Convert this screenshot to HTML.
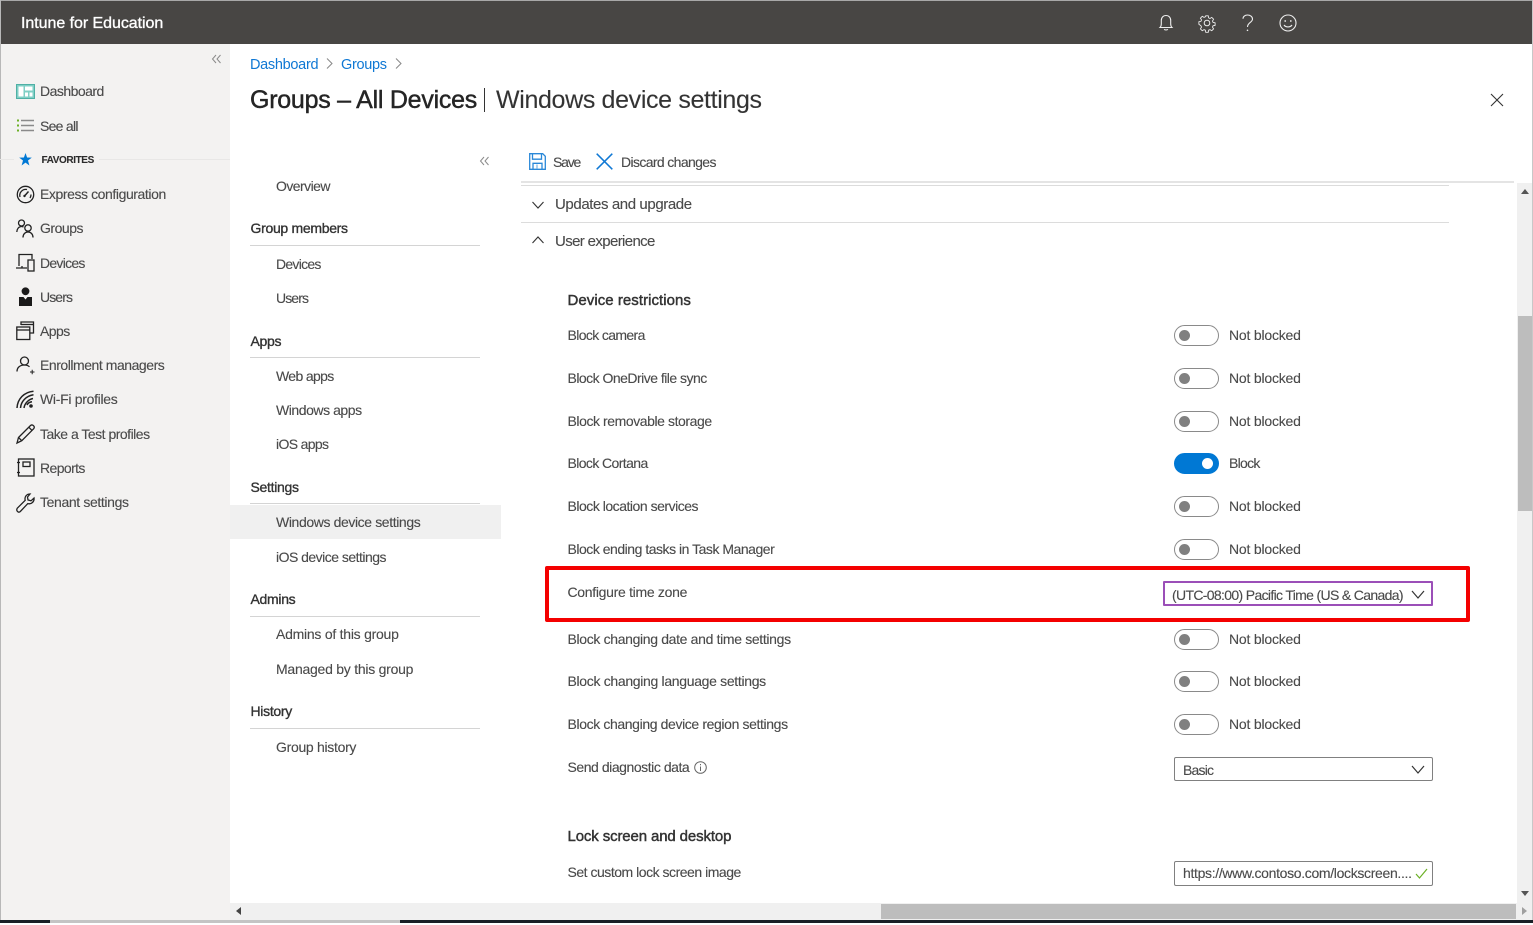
<!DOCTYPE html>
<html><head><meta charset="utf-8"><title>Intune for Education</title>
<style>
html,body{margin:0;padding:0;width:1533px;height:925px;overflow:hidden;background:#fff;font-family:"Liberation Sans",sans-serif;color:#4a4a4a}
.a{position:absolute}
.t{position:absolute;white-space:nowrap;line-height:20px;font-size:14px;letter-spacing:-.3px;color:#4a4a4a;-webkit-text-stroke:.12px #4a4a4a}
.h{color:#333;font-weight:400;-webkit-text-stroke:.35px #333}
.s{font-size:15px;letter-spacing:.05px;-webkit-text-stroke:.45px #333}
.l{position:absolute;background:#d4d4d4;height:1px}
svg{position:absolute;overflow:visible}
.sw{position:absolute;left:1174px;width:43px;height:19px;border:1.5px solid #8a8a8a;border-radius:11px;background:#fff}
.sw i{position:absolute;left:4px;top:4px;width:11px;height:11px;border-radius:50%;background:#808080}
.sw.on{background:#0078d4;border-color:#0078d4}
.sw.on i{left:27px;background:#fff}
.st{left:1229px;letter-spacing:-.2px}
</style></head><body>
<div class="a" style="left:0;top:0;width:1533px;height:44px;background:#484644"></div>
<div class="a" style="left:0;top:0;width:1533px;height:1px;background:#a8a8a8"></div>
<div class="a" style="left:0;top:44px;width:230px;height:876px;background:#f3f2f1"></div>
<div class="a" style="left:0;top:0;width:1px;height:920px;background:#b8b8b8"></div>
<div class="a" style="left:1532px;top:0;width:1px;height:920px;background:#c8c8c8"></div>
<div class="t" style="left:21px;top:14px;color:#fff;font-size:16px;letter-spacing:-.05px;-webkit-text-stroke:.35px #fff">Intune for Education</div>

<!-- header icons -->
<svg style="left:1158px;top:14px" width="16" height="18" viewBox="0 0 16 18" fill="none" stroke="#eee" stroke-width="1.1"><path d="M2 13.500h12c-1-1-1.300-2-1.300-3.500V6.500C12.700 3.500 10.800 1.500 8 1.500S3.300 3.500 3.300 6.500V10C3.300 11.500 3 12.500 2 13.500Z"/><path d="M6.200 15.200c.5 1 3.100 1 3.600 0"/></svg>
<svg style="left:1198px;top:14px" width="18" height="18" viewBox="0 0 18 18" fill="none" stroke="#eee" stroke-width="1"><circle cx="9" cy="9" r="2.800"/><path d="M7.600 1h2.800l.4 2.300 1.500.7 2-1.200 2 2-1.200 2 .6 1.500 2.300.5v2.800l-2.300.5-.6 1.500 1.200 2-2 2-2-1.200-1.500.6-.4 2.300H7.600l-.4-2.300-1.500-.6-2 1.200-2-2 1.200-2-.6-1.500L0 10.400V7.600l2.300-.5.6-1.500-1.200-2 2-2 2 1.200 1.500-.7Z" transform="translate(.9 .9) scale(.9)"/></svg>
<svg style="left:1242px;top:14px" width="12" height="18" viewBox="0 0 12 18" fill="none" stroke="#eee" stroke-width="1.1"><path d="M1 4.800C1 2.500 3 1 5.500 1S10.500 2.500 10.500 5c0 3.500-5 3.600-5 8"/><circle cx="5.500" cy="16.300" r=".8" fill="#eee" stroke="none"/></svg>
<svg style="left:1279px;top:14px" width="18" height="18" viewBox="0 0 18 18" fill="none" stroke="#eee" stroke-width="1.1"><circle cx="9" cy="9" r="8"/><circle cx="6.200" cy="7" r=".9" fill="#eee" stroke="none"/><circle cx="11.800" cy="7" r=".9" fill="#eee" stroke="none"/><path d="M5 11c1.800 2.600 6.200 2.600 8 0"/></svg>

<!-- left nav -->
<svg style="left:212px;top:54px" width="9" height="10" viewBox="0 0 9 10" fill="none" stroke="#8a8a8a"><path d="M4 1 .5 5 4 9M8.500 1 5 5l3.500 4"/></svg>
<svg style="left:16px;top:84px" width="19" height="15" viewBox="0 0 19 15"><rect x=".5" y=".5" width="18" height="14" fill="#7fcfc5" stroke="#4fb0a5"/><rect x="2.500" y="2.500" width="5" height="10" fill="#fff"/><rect x="9" y="2.500" width="7.500" height="4" fill="#fff"/><rect x="9" y="8.500" width="3" height="4" fill="#fff"/><rect x="13.500" y="8.500" width="3" height="4" fill="#fff"/></svg>
<div class="t" style="left:40px;top:81px;letter-spacing:-.52px">Dashboard</div>
<svg style="left:16px;top:119px" width="19" height="14" viewBox="0 0 19 14"><path d="M5 1.500h13M5 6.500h13M5 11.500h13" stroke="#8a8a8a" stroke-width="1.500"/><path d="M1 .5h2v2H1zM1 5.500h2v2H1zM1 10.500h2v2H1z" fill="#6bb025"/></svg>
<div class="t" style="left:40px;top:116px;letter-spacing:-.72px">See all</div>
<div class="l" style="left:0;top:159px;width:14px;background:#e8e7e6"></div>
<div class="l" style="left:99px;top:159px;width:131px;background:#e8e7e6"></div>
<svg style="left:19px;top:153px" width="13" height="13" viewBox="0 0 13 13"><path d="M6.500 0 8.100 4.500 12.800 4.600 9 7.500 10.400 12.500 6.500 9.600 2.600 12.500 4 7.500.2 4.600 4.900 4.500Z" fill="#0078d4"/></svg>
<div class="t" style="left:41.500px;top:151px;font-size:10px;font-weight:700;color:#2b2b2b;letter-spacing:-.4px">FAVORITES</div>

<svg style="left:16px;top:185px" width="19" height="19" viewBox="0 0 19 19" fill="none" stroke="#222" stroke-width="1.300"><circle cx="9.500" cy="9.500" r="8.200"/><path d="M4 12a6 6 0 0 1 7-7.500M15 9.500a6 6 0 0 1-1 3.500"/><path d="M8.500 11 12.500 6.500" stroke-width="1.500"/><circle cx="8.500" cy="11" r="1.200" fill="#222" stroke="none"/></svg>
<div class="t" style="left:40px;top:184px;letter-spacing:-.42px">Express configuration</div>
<svg style="left:16px;top:219px" width="19" height="19" viewBox="0 0 19 19" fill="none" stroke="#222" stroke-width="1.300"><circle cx="5.500" cy="4" r="3"/><path d="M.8 13c0-3 2-5.500 4.700-5.500.7 0 1.400.2 2 .5"/><circle cx="12" cy="9" r="3.200"/><path d="M7 18.500c0-3.300 2-5.500 5-5.500s5 2.200 5 5.500"/></svg>
<div class="t" style="left:40px;top:218px;letter-spacing:-.47px">Groups</div>
<svg style="left:16px;top:253px" width="19" height="19" viewBox="0 0 19 19" fill="none" stroke="#222" stroke-width="1.300"><path d="M3 13V1.500h13V6M0 15h11"/><path d="M6 13v2"/><rect x="12" y="7" width="6" height="11"/></svg>
<div class="t" style="left:40px;top:253px;letter-spacing:-.73px">Devices</div>
<svg style="left:18px;top:287px" width="15" height="20" viewBox="0 0 15 20"><circle cx="7.500" cy="4.300" r="3.900" fill="#1a1a1a"/><path d="M1 10h4.500L7.500 12.500 9.500 10H14V19H1Z" fill="#1a1a1a"/></svg>
<div class="t" style="left:40px;top:287px;letter-spacing:-.9px">Users</div>
<svg style="left:16px;top:321px" width="19" height="20" viewBox="0 0 19 20" fill="none" stroke="#222" stroke-width="1.300"><path d="M5 4V1h12.500v11H14"/><path d="M5 3.500h12.500"/><rect x=".8" y="6" width="13" height="12.500"/><path d="M.8 9h13"/></svg>
<div class="t" style="left:40px;top:321px;letter-spacing:-.55px">Apps</div>
<svg style="left:16px;top:356px" width="20" height="20" viewBox="0 0 20 20" fill="none" stroke="#222" stroke-width="1.300"><circle cx="8.500" cy="5" r="4"/><path d="M1 15.500C1 11.500 4 9 8.500 9c2 0 3.700.6 5 1.800"/><path d="M14 16h4.500M16.200 13.800v4.400" stroke-width="1"/></svg>
<div class="t" style="left:40px;top:355px;letter-spacing:-.46px">Enrollment managers</div>
<svg style="left:16px;top:390px" width="19" height="19" viewBox="0 0 19 19" fill="none" stroke="#222" stroke-width="1.500"><path d="M1 18C1.500 9 8 2 17.500 1.200M4.500 18C5 11.500 10 6 17.500 4.800M8 18C8.500 14 12 9.500 17 8.500M11 15c.7-1.500 2.500-3 5-3.300"/><circle cx="15" cy="16" r="1.800" fill="#222" stroke="none"/></svg>
<div class="t" style="left:40px;top:389px">Wi-Fi profiles</div>
<svg style="left:16px;top:424px" width="19" height="20" viewBox="0 0 19 20" fill="none" stroke="#222" stroke-width="1.300"><path d="M1 19 2.500 13.500 14.500 1.500c1-.8 2-.8 3 .2s1 2 .2 3L5.800 16.700Z"/><path d="M2.500 13.500 5.800 16.700M12.800 3.200 16 6.400"/></svg>
<div class="t" style="left:40px;top:424px;letter-spacing:-.5px">Take a Test profiles</div>
<svg style="left:17px;top:458px" width="18" height="20" viewBox="0 0 18 20" fill="none" stroke="#222" stroke-width="1.300"><rect x="1.500" y="1" width="15.500" height="17"/><rect x="6" y="4" width="7" height="4.500"/><path d="M0 4.500h3M0 14.500h3"/></svg>
<div class="t" style="left:40px;top:458px;letter-spacing:-.6px">Reports</div>
<svg style="left:16px;top:493px" width="19" height="19" viewBox="0 0 19 19" fill="none" stroke="#222" stroke-width="1.300"><path d="M1.300 15.200 9.200 7.300C8.300 4 10.500 1 14 1l-2.500 3 .5 3 3 .8 3-2.700c.5 3.500-2.500 6.500-6.200 5.500l-7.600 8c-1.800 1.500-4.500-.8-2.900-3.400Z"/></svg>
<div class="t" style="left:40px;top:492px;letter-spacing:-.37px">Tenant settings</div>

<!-- breadcrumbs / title -->
<div class="t" style="left:250px;top:55px;color:#0f78d4;font-size:14.500px;letter-spacing:-.3px;-webkit-text-stroke:0">Dashboard</div>
<svg style="left:326px;top:58px" width="7" height="11" viewBox="0 0 7 11" fill="none" stroke="#888"><path d="M1 .5 6 5.500 1 10.500"/></svg>
<div class="t" style="left:341px;top:55px;color:#0f78d4;font-size:14.500px;letter-spacing:-.3px;-webkit-text-stroke:0">Groups</div>
<svg style="left:395px;top:58px" width="7" height="11" viewBox="0 0 7 11" fill="none" stroke="#888"><path d="M1 .5 6 5.500 1 10.500"/></svg>
<div class="t" style="left:250px;top:85px;line-height:30px;font-size:25px;letter-spacing:-.25px;color:#252525;-webkit-text-stroke:.45px #252525">Groups – All Devices</div>
<div class="a" style="left:484px;top:88px;width:1px;height:24px;background:#333"></div>
<div class="t" style="left:496px;top:85px;line-height:30px;font-size:25px;letter-spacing:-.35px;color:#333">Windows device settings</div>
<svg style="left:1490px;top:93px" width="14" height="14" viewBox="0 0 14 14" stroke="#333" stroke-width="1.100"><path d="M1 1 13 13M13 1 1 13"/></svg>

<!-- sub nav -->
<svg style="left:480px;top:156px" width="9" height="10" viewBox="0 0 9 10" fill="none" stroke="#8a8a8a"><path d="M4 1 .5 5 4 9M8.500 1 5 5l3.500 4"/></svg>
<div class="t" style="left:276px;top:176px;letter-spacing:-.55px">Overview</div>
<div class="t h" style="left:250.500px;top:218px">Group members</div>
<div class="l" style="left:250px;top:245px;width:230px"></div>
<div class="t" style="left:276px;top:254px;letter-spacing:-.73px">Devices</div>
<div class="t" style="left:276px;top:288px;letter-spacing:-.9px">Users</div>
<div class="t h" style="left:250.500px;top:331px">Apps</div>
<div class="l" style="left:250px;top:357px;width:230px"></div>
<div class="t" style="left:276px;top:366px;letter-spacing:-.65px">Web apps</div>
<div class="t" style="left:276px;top:400px;letter-spacing:-.45px">Windows apps</div>
<div class="t" style="left:276px;top:434px;letter-spacing:-.65px">iOS apps</div>
<div class="t h" style="left:250.500px;top:477px">Settings</div>
<div class="l" style="left:250px;top:503px;width:230px"></div>
<div class="a" style="left:230px;top:505px;width:271px;height:34px;background:#f0f0f0"></div>
<div class="t" style="left:276px;top:512px;letter-spacing:-.39px">Windows device settings</div>
<div class="t" style="left:276px;top:547px;letter-spacing:-.52px">iOS device settings</div>
<div class="t h" style="left:250.500px;top:589px">Admins</div>
<div class="l" style="left:250px;top:616px;width:230px"></div>
<div class="t" style="left:276px;top:624px;letter-spacing:-.25px">Admins of this group</div>
<div class="t" style="left:276px;top:659px;letter-spacing:-.25px">Managed by this group</div>
<div class="t h" style="left:250.500px;top:701px">History</div>
<div class="l" style="left:250px;top:728px;width:230px"></div>
<div class="t" style="left:276px;top:737px">Group history</div>

<!-- toolbar -->
<svg style="left:529px;top:153px" width="17" height="17" viewBox="0 0 17 17" fill="none" stroke="#2a88d8" stroke-width="1.300"><path d="M.7.700h13L16.300 3.300v13H.7Z"/><path d="M3.500.7v5.500h9V.7M4 16.300v-6h9v6"/><path d="M8 11.500v4" stroke="#7fb8e8"/></svg>
<div class="t" style="left:553px;top:152px;letter-spacing:-1.200px">Save</div>
<svg style="left:596px;top:153px" width="17" height="17" viewBox="0 0 17 17" stroke="#0f78d4" stroke-width="1.500"><path d="M.7.700 16.300 16.300M16.300.700.7 16.300"/></svg>
<div class="t" style="left:621px;top:152px;letter-spacing:-.63px">Discard changes</div>
<div class="a" style="left:521px;top:181px;width:993px;height:2px;background:#e4e4e4"></div>
<div class="l" style="left:521px;top:185px;width:928px;background:#dcdcdc"></div>
<svg style="left:532px;top:201px" width="12" height="8" viewBox="0 0 12 8" fill="none" stroke="#333" stroke-width="1.100"><path d="M.5 1 6 7 11.500 1"/></svg>
<div class="t" style="left:555px;top:195px;font-size:15px;letter-spacing:-.4px">Updates and upgrade</div>
<div class="l" style="left:521px;top:222px;width:928px;background:#dcdcdc"></div>
<svg style="left:532px;top:236px" width="12" height="8" viewBox="0 0 12 8" fill="none" stroke="#333" stroke-width="1.100"><path d="M.5 7 6 1 11.500 7"/></svg>
<div class="t" style="left:555px;top:232px;font-size:15px;letter-spacing:-.63px">User experience</div>

<!-- settings -->
<div class="t h s" style="left:567.500px;top:291px">Device restrictions</div>
<div class="t" style="left:567.500px;top:325px;letter-spacing:-.63px">Block camera</div>
<div class="sw" style="top:325px"><i></i></div><div class="t st" style="top:325px">Not blocked</div>
<div class="t" style="left:567.500px;top:368px;letter-spacing:-.52px">Block OneDrive file sync</div>
<div class="sw" style="top:368px"><i></i></div><div class="t st" style="top:368px">Not blocked</div>
<div class="t" style="left:567.500px;top:411px;letter-spacing:-.43px">Block removable storage</div>
<div class="sw" style="top:411px"><i></i></div><div class="t st" style="top:411px">Not blocked</div>
<div class="t" style="left:567.500px;top:453px;letter-spacing:-.6px">Block Cortana</div>
<div class="sw on" style="top:453px"><i></i></div><div class="t st" style="top:453px;letter-spacing:-.7px">Block</div>
<div class="t" style="left:567.500px;top:496px;letter-spacing:-.48px">Block location services</div>
<div class="sw" style="top:496px"><i></i></div><div class="t st" style="top:496px">Not blocked</div>
<div class="t" style="left:567.500px;top:539px;letter-spacing:-.48px">Block ending tasks in Task Manager</div>
<div class="sw" style="top:539px"><i></i></div><div class="t st" style="top:539px">Not blocked</div>

<div class="a" style="left:545px;top:566px;width:917px;height:48px;border:4px solid #f40000;border-radius:2px"></div>
<div class="t" style="left:567.500px;top:582px">Configure time zone</div>
<div class="a" style="left:1163px;top:581px;width:266px;height:21px;border:2px solid #9b4fb8;border-radius:1px"></div>
<div class="t" style="left:1172px;top:585px;letter-spacing:-.66px">(UTC-08:00) Pacific Time (US &amp; Canada)</div>
<svg style="left:1411px;top:590px" width="14" height="9" viewBox="0 0 14 9" fill="none" stroke="#333" stroke-width="1.200"><path d="M1 1 7 8 13 1"/></svg>

<div class="t" style="left:567.500px;top:629px;letter-spacing:-.34px">Block changing date and time settings</div>
<div class="sw" style="top:629px"><i></i></div><div class="t st" style="top:629px">Not blocked</div>
<div class="t" style="left:567.500px;top:671px;letter-spacing:-.32px">Block changing language settings</div>
<div class="sw" style="top:671px"><i></i></div><div class="t st" style="top:671px">Not blocked</div>
<div class="t" style="left:567.500px;top:714px;letter-spacing:-.38px">Block changing device region settings</div>
<div class="sw" style="top:714px"><i></i></div><div class="t st" style="top:714px">Not blocked</div>
<div class="t" style="left:567.500px;top:757px;letter-spacing:-.45px">Send diagnostic data</div>
<svg style="left:694px;top:761px" width="13" height="13" viewBox="0 0 13 13" fill="none" stroke="#666"><circle cx="6.500" cy="6.500" r="5.800"/><path d="M6.500 5.500v4.500M6.500 3v1.300"/></svg>
<div class="a" style="left:1174px;top:757px;width:257px;height:22px;border:1.500px solid #808080;border-radius:2px"></div>
<div class="t" style="left:1183px;top:760px;letter-spacing:-.8px">Basic</div>
<svg style="left:1411px;top:765px" width="14" height="9" viewBox="0 0 14 9" fill="none" stroke="#333" stroke-width="1.200"><path d="M1 1 7 8 13 1"/></svg>

<div class="t h s" style="left:567.500px;top:827px;letter-spacing:-.13px">Lock screen and desktop</div>
<div class="t" style="left:567.500px;top:862px;letter-spacing:-.48px">Set custom lock screen image</div>
<div class="a" style="left:1174px;top:861px;width:257px;height:23px;border:1.500px solid #808080;border-radius:2px"></div>
<div class="t" style="left:1183px;top:863px;letter-spacing:-.33px">https://www.contoso.com/lockscreen....</div>
<svg style="left:1415px;top:868px" width="13" height="11" viewBox="0 0 13 11" fill="none" stroke="#6bb025" stroke-width="1.200"><path d="M1 6 4.500 10 12 1"/></svg>

<!-- scrollbars -->
<div class="a" style="left:1517px;top:183px;width:15px;height:720px;background:#f0f0f0"></div>
<div class="a" style="left:1518px;top:316px;width:14px;height:195px;background:#bdbdbd"></div>
<svg style="left:1521px;top:189px" width="8" height="5" viewBox="0 0 8 5"><path d="M4 0 8 5H0Z" fill="#555"/></svg>
<svg style="left:1521px;top:891px" width="8" height="5" viewBox="0 0 8 5"><path d="M0 0H8L4 5Z" fill="#555"/></svg>
<div class="a" style="left:230px;top:903px;width:1302px;height:17px;background:#f0f0f0"></div>
<div class="a" style="left:881px;top:904px;width:635px;height:15px;background:#bdbdbd"></div>
<svg style="left:236px;top:907px" width="5" height="8" viewBox="0 0 5 8"><path d="M5 0V8L0 4Z" fill="#444"/></svg>
<svg style="left:1522px;top:907px" width="5" height="8" viewBox="0 0 5 8"><path d="M0 0V8L5 4Z" fill="#a0a0a0"/></svg>

<!-- bottom edge -->
<div class="a" style="left:0;top:920px;width:1533px;height:3px;background:#c4c4c4"></div>
<div class="a" style="left:0;top:920px;width:50px;height:3px;background:#1a1f26"></div>
<div class="a" style="left:400px;top:920px;width:1133px;height:3px;background:#1a1f26"></div>
<div class="a" style="left:0;top:923px;width:1533px;height:2px;background:#fff"></div>
</body></html>
